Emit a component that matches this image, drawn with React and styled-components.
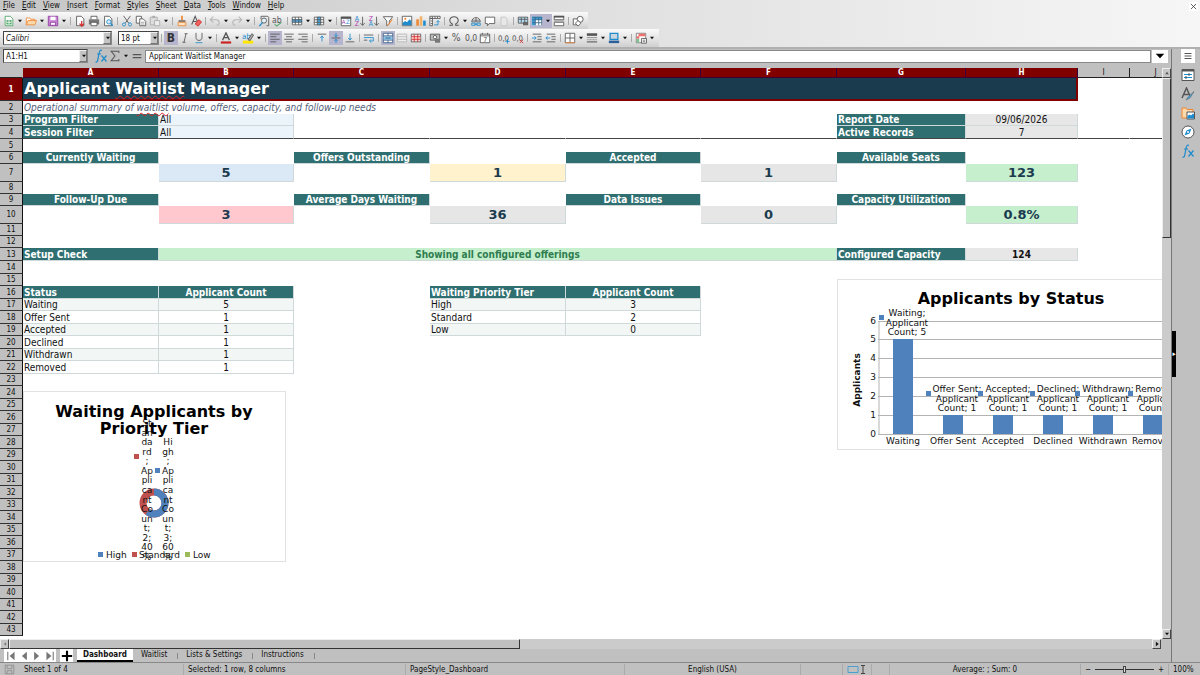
import React, { useState } from 'react'
import styled, { createGlobalStyle, css } from 'styled-components'

const GlobalStyle = createGlobalStyle`
  * { box-sizing: border-box; }
  body {
    margin: 0;
    background: #c0c0c0;
    color: #111;
    font-family: "DejaVu Sans Condensed", "DejaVu Sans", sans-serif;
    font-size: 8px;
  }
  button, input, select { font: inherit; color: inherit; margin: 0; }
  button { padding: 0; border: 0; background: none; }
`

// ---------- icons, all on a 14 x 14 grid ----------

const G = '#555'
const B = '#1e8bcd'
const O = '#ed8733'
const R = '#d0302c'

const line = (d, stroke = G, width = 1) => (
  <path d={d} fill="none" stroke={stroke} strokeWidth={width} />
)
const page = <path d="M3 1.500h5.500l3 3v8h-8.500z" fill="#fff" stroke={G} strokeWidth="1" />
const gridBox = line('M1.500 2.500h11v9h-11zM1.500 5.500h11M1.500 8.500h11M5 2.500v9M9 2.500v9')

const icons = {
  new: <><path d="M2.500 1.500h6l3 3v8h-9z" fill="#fff" stroke="#4ba566" /><path d="M4 6h6v5H4z" fill="#4ba566" />{line('M4 8.500h6M7 6v5', '#fff')}</>,
  open: <><path d="M1.500 11.500v-8h4l1 1.500h5v2" fill="#fff" stroke={O} /><path d="M1.500 11.500l2-5h10l-2 5z" fill="#fbd9ab" stroke={O} /></>,
  save: <><path d="M1.500 1.500h11v11h-11z" fill="#c986d4" stroke="#8d3aa0" /><path d="M4 2h6v4H4z" fill="#fff" /><path d="M4 8.500h6V12H4z" fill="#fff" stroke="#8d3aa0" /></>,
  pdf: <>{page}<path d="M9 7v4.500M6.500 10l2.500 3 2.500-3" stroke={R} fill="none" strokeWidth="1.500" /></>,
  print: <><path d="M3.500 5V1.500h7V5" fill="#fff" stroke={G} /><path d="M1 5h12v6H1z" fill="#777" /><path d="M3.500 8.500h7v4h-7z" fill="#fff" stroke={G} /></>,
  preview: <>{page}<circle cx="8" cy="8" r="2.500" fill="#d7ecf8" stroke={B} />{line('M10 10l2.500 2.500', B, 1.500)}</>,
  cut: <>{line('M3 1l6 8.500M11 1L5 9.500')}<circle cx="3.500" cy="11" r="1.800" fill="none" stroke={B} /><circle cx="10.500" cy="11" r="1.800" fill="none" stroke={B} /></>,
  copy: <><path d="M1.500 1.500h6v8h-6z" fill="#fff" stroke={G} /><path d="M5.500 4.500h4l3 3v5h-7z" fill="#fff" stroke={G} />{line('M7 8.500h4M7 10.500h4', '#999')}</>,
  paste: <><path d="M1.500 2.500h8v9h-8z" fill="#ddd" stroke="#aaa" /><path d="M4 1h3v2.500H4z" fill="#aaa" /><path d="M6.500 6.500h6v6h-6z" fill="#eee" stroke="#aaa" /></>,
  clone: <><path d="M6 1h2v5H6z" fill={O} /><path d="M3 6h8v2.500H3z" fill="#777" /><path d="M2.500 8.500h9v4h-9z" fill="#fde3c4" stroke={O} /></>,
  clear: <>{line('M2 11L6 1.500l3 7M3.500 7.500h4', G, 1.200)}<path d="M6 10.500l4-5 3.500 2.500-4 5z" fill="#f0625f" stroke={R} /></>,
  undo: line('M5 2L1.500 5.500 5 9M2 5.500h6c5 0 5 6.500 1 6.500', '#b5b5b5', 1.200),
  redo: line('M9 2l3.500 3.500L9 9M12 5.500H6c-5 0-5 6.500-1 6.500', '#b5b5b5', 1.200),
  find: <>{line('M3.500 5V1.500h8l1 1v10H10')}<circle cx="7" cy="6.500" r="3" fill="#e3f1fa" stroke={G} />{line('M5 9l-3.500 4', B, 1.500)}</>,
  spell: <><text x="0" y="9" fontSize="10" fill={G}>ab</text>{line('M3 10.500l2.500 2.500L11 8.500', '#4ba566', 1.200)}</>,
  rows: <><path d="M1 2h12v10H1z" fill="#fff" /><path d="M1 5h12v3.500H1z" fill="#4aa7df" />{gridBox}</>,
  cols: <><path d="M1 2h12v10H1z" fill="#fff" /><path d="M5 2h4v10H5z" fill="#4aa7df" />{gridBox}</>,
  sort: <><path d="M1.500 2.500h11v10h-11z" fill="#fff" stroke={G} /><path d="M1 2h12v2.500H1z" fill={G} /><text x="2" y="11" fontSize="7" fill="#9a3fb0">A</text><text x="7" y="11" fontSize="7" fill={B}>Z</text></>,
  sortUp: <><text x="1" y="6.500" fontSize="8" fill={B}>A</text><text x="1" y="13" fontSize="8" fill="#b03fb0">Z</text>{line('M10 2v10M7.500 9.500l2.500 2.500 2.500-2.500')}</>,
  sortDown: <><text x="1" y="6.500" fontSize="8" fill="#b03fb0">Z</text><text x="1" y="13" fontSize="8" fill={B}>A</text>{line('M10 2v10M7.500 9.500l2.500 2.500 2.500-2.500')}</>,
  filter: <><path d="M1.500 2h11L8.500 7v3.500l-3 2V7z" fill="#fff" stroke={G} />{line('M6.500 12.500L12 5', O, 1.200)}</>,
  image: <><path d="M1.500 1.500h11v11h-11z" fill="#fff" stroke={G} /><path d="M2 12V9l3-2 2 1.500L10 5l2 2v5z" fill={B} /><circle cx="5" cy="4.500" r="1.200" fill={O} /></>,
  chart: <><path d="M1.500 5h3v7.500h-3z" fill={O} /><path d="M5.500 1.500h3v11h-3z" fill="#f3b367" /><path d="M9.500 6.500h3v6h-3z" fill={B} /></>,
  pivot: <><path d="M1 1.500h12V4H1zM1 4h3v8.500H1z" fill="#fff" stroke={G} />{line('M4 2v2M7 2v2M10 2v2M2 7h2M2 10h2')}{line('M6 11.500h4.500v-5M8.500 8.500l2-2 2 2', B)}</>,
  omega: line('M1.500 12h3.500v-1.500C0 7.500 2 2 7 2s7 5.500 2 8.500V12h3.500', G, 1.200),
  link: <><path d="M2 8a5 5 0 0110 0z" fill="#fff" stroke={G} />{line('M7 3v5M2.500 6h9')}<path d="M2 9.500h4v2.500H2zM8 9.500h4v2.500H8zM5 10.800h4" fill="none" stroke={B} /></>,
  comment: <path d="M1.500 2.500h11v7.500H6l-2 2.500V10H1.500z" fill="#fff" stroke={G} />,
  header: <path d="M3.500 2.500h5l2 2v8h-7z" fill="#e8e8e8" stroke="#c2c2c2" />,
  printArea: <><path d="M1.500 2.500h11v7h-11z" fill="#b5dcf3" stroke={G} />{line('M2 5h10M5 3v6M9 3v6')}<path d="M7 8h6v4H7z" fill="#666" /></>,
  freeze: <><path d="M1 2h12v10H1z" fill="#fff" /><path d="M1 2h12v3.500H5V12H1z" fill="#3f9bd6" />{line('M1.500 2.500h11v9.500M5 2.500v9.500M9 2.500v9.500M1.500 5.500h11M1.500 9h11', '#36678a')}</>,
  split: <><path d="M1.500 1.500h11v4h-11zM1.500 8.500h11v4h-11z" fill="#fff" stroke={G} /><path d="M1 1h12v2H1z" fill={G} />{line('M1 7h12', '#888')}</>,
  shapes: <><path d="M1.500 4.500h6v7h-6z" fill="#fff" stroke={G} /><circle cx="9.500" cy="5" r="3.500" fill="#fff" stroke={G} /><path d="M7 13l-3-3.500 3-3 3.500 3z" fill="#fff" stroke={G} /></>,

  bold: <text x="2" y="12" fontSize="14" fontWeight="bold" fill="#333">B</text>,
  italic: line('M6.500 2H10M4 12h3.500M8.200 2L5.800 12'),
  underline: <>{line('M3.500 1v5.500c0 4.500 7 4.500 7 0V1')}{line('M3 12.500h8', B)}</>,
  fontColor: <>{line('M3 9.500l4-8.500 4 8.500M4.500 6.500h5', G, 1.500)}<path d="M1 11h12v2.500H1z" fill="#c9211e" /></>,
  highlight: <><path d="M1 10h12v3.500H1z" fill="#ffe600" /><text x="0" y="8" fontSize="9" fill={B}>ab</text><path d="M7 9l4.500-7 2 1.500L9.500 10z" fill="#aaa" stroke={G} /></>,
  left: line('M1.500 2.500h11M1.500 5.500h7M1.500 8.500h11M1.500 11.500h7'),
  center: line('M1.500 2.500h11M3.500 5.500h7M1.500 8.500h11M3.500 11.500h7'),
  right: line('M1.500 2.500h11M5.500 5.500h7M1.500 8.500h11M5.500 11.500h7'),
  top: <>{line('M2 2.500h10')}{line('M7 11V5M5 7l2-2.500L9 7', B)}</>,
  middle: <>{line('M2 7h10')}{line('M7 1v5M7 8v5M5 3.500l2 2 2-2M5 10.500l2-2 2 2', B)}</>,
  bottom: <>{line('M2 11.500h10')}{line('M7 2v6.500M5 7l2 2.500L9 7', B)}</>,
  wrap: <>{line('M1 3.500h11M1 9.500h4')}{line('M1 6.500h11v4H8M9.500 8.500l-2 2 2 2', B)}</>,
  merge: <><path d="M1.500 1.500h11v11h-11z" fill="#fff" stroke="#3a5c86" /><path d="M2 5h10v4H2z" fill="#85c5ea" />{line('M1.500 4.500h11M1.500 9.500h11M7 1.500v3M7 9.500v3M4 7h6', '#3a5c86')}</>,
  mergeCells: <><path d="M1.500 2.500h11v9h-11z" fill="#eee" stroke="#b5b5b5" />{line('M1.500 5.500h11M1.500 8.500h11', '#b5b5b5')}</>,
  unmerge: <><path d="M1.500 2.500h11v9h-11z" fill="#fff" stroke={G} /><path d="M2 5h10v4H2z" fill="#f9bab8" />{line('M1.500 5h11M1.500 9h11M5 2.500v9M9 2.500v9', R)}</>,
  currency: <><path d="M1.500 2.500h11v7h-11z" fill="#bbb" stroke={G} /><circle cx="7" cy="6" r="2" fill="#fff" stroke={G} /><path d="M7 8h6v4.500H7z" fill="#777" /></>,
  percent: <text x="1" y="11" fontSize="12" fill={G}>%</text>,
  number: <text x="0" y="11" fontSize="10" fill={G}>0,0</text>,
  date: <><path d="M1.500 2.500h11v10h-11z" fill="#fff" stroke={G} />{line('M1.500 4.500h11M4 1v2M10 1v2', G)}<text x="5" y="12" fontSize="8" fill={G}>7</text></>,
  addDecimal: <><text x="0" y="10" fontSize="9" fill={G}>0,0</text>{line('M11 8.500v5M8.500 11h5', B)}</>,
  delDecimal: <><text x="0" y="10" fontSize="9" fill={G}>0,0</text>{line('M9 9l4 4M13 9l-4 4', R)}</>,
  indent: <>{line('M2 2.500h10M7.500 5.500h5M7.500 8.500h5M2 11.500h10')}{line('M1 7h5M4 5l2 2-2 2', B)}</>,
  outdent: <>{line('M2 2.500h10M7.500 5.500h5M7.500 8.500h5M2 11.500h10')}{line('M6 7H1M3 5L1 7l2 2', B)}</>,
  borders: <><path d="M1.500 1.500h11v11h-11z" fill="#fff" stroke={G} />{line('M7 2v10M2 7h10')}{line('M1.500 12.500h11', O)}</>,
  lineStyle: <><path d="M1 1.500h12v3H1z" fill={G} />{line('M1 6.500h12', '#888')}{line('M1 9h12', '#999')}<path d="M1 10.500h12v2H1z" fill="#888" /></>,
  borderColor: <><path d="M2.500 1.500h9v7h-9z" fill="#c9d6df" stroke={B} strokeWidth="1.500" /><path d="M1 10h12v3H1z" fill="#2a6099" /></>,
  conditional: <><path d="M1.500 1.500h11v11h-11z" fill="#fff" stroke="#777" /><path d="M4 2h8v3H4zM2 5h3v3H2z" fill="#f0706d" /><path d="M2 8h3v4H2z" fill="#7fc58f" /><path d="M7.500 7.500h6v5.500h-6z" fill="#fff" stroke={G} />{line('M9 9.500h3M9 11h3', '#777')}</>,

  fx: <><path d="M8 1.500c-2-1-2.500.5-3 3.500L3.500 12c-.3 1-1 1.500-2 1M3 5h4" fill="none" stroke={B} strokeWidth="1.200" />{line('M7.500 6.500l5 6M12.500 6.500l-5 6', B, 1.200)}</>,
  sum: line('M11.500 3.500v-2h-9L7 7l-4.500 5.500h9v-2', G, 1.200),
  equals: line('M2 5.500h10M2 9h10', G, 1.500),
  menu: line('M3.500 4.500h7M3.500 7h7M3.500 9.500h7'),
  props: <><path d="M1 1.500h12v11H1z" fill="#fff" stroke={G} /><path d="M1 1h12v2.500H1z" fill={G} />{line('M3 6.500h8M3 9.500h8', B)}{line('M8 5v3M5 8v3', G)}</>,
  styles: <>{line('M1 11L5.500 1 9 9M2.500 7.500h5', G, 1.500)}<path d="M5 13l2-3 6-5.500-4 6.500z" fill="#4aa7df" stroke={G} strokeWidth="0.500" /></>,
  gallery: <><path d="M1 12V2h4l1 1.500h6V12z" fill="#fbd9ab" stroke={O} /><path d="M6 6h7.500v7H6z" fill="#fff" stroke={G} /><path d="M6.500 12.500V10l2-1.500 1.500 1 2-2 1 1v4z" fill={B} /></>,
  navigator: <><circle cx="7" cy="7" r="6" fill="#fff" stroke={G} /><path d="M10.500 3.500L8.500 8.500 3.500 10.500l2-5z" fill={B} /><circle cx="7" cy="7" r="1" fill="#fff" /></>,
  disk: <><path d="M1.500 1.500h11v11h-11z" fill="none" stroke="#888" />{line('M4 2v4h6V2M4 12.500v-4h6v4', '#888')}</>,
  close: line('M3 3l8 8M11 3l-8 8', '#333', 1.200),
  caret: <path d="M3.500 5h7L7 9z" fill="#111" />,
  caretBig: <path d="M1 4h12l-6 6z" fill="#000" />,
  first: <><path d="M12 1v12L5 7z" fill="#777" />{line('M2.500 1v12', '#777', 1.500)}</>,
  prev: <path d="M11 1v12L4 7z" fill="#777" />,
  next: <path d="M3 1v12l7-6z" fill="#777" />,
  last: <><path d="M2 1v12l7-6z" fill="#777" />{line('M11.500 1v12', '#777', 1.500)}</>,
  plus: line('M7 1v12M1 7h12', '#000', 2.500),
  up: <path d="M4 9h6L7 5z" fill="#555" />,
  leftArrow: <path d="M9 4v6L5 7z" fill="#777" />,
  rightArrow: <path d="M5 3v8l5-4z" fill="#111" />,
}

const Svg = styled.svg`
  display: block;
  flex: none;
`

const Icon = ({ name, size = 14 }) => (
  <Svg width={size} height={size} viewBox="0 0 14 14" aria-hidden="true">
    {icons[name]}
  </Svg>
)

// ---------- window chrome ----------

const Window = styled.div`
  display: flex;
  flex-direction: column;
  height: 100vh;
  overflow: hidden;
`

const TopArea = styled.header`
  flex: none;
  height: 47px;
  background: linear-gradient(90deg, #c6c6c6, #e0e0e0 50%, #f6f6f6);
`

const MenuBar = styled.nav`
  display: flex;
  align-items: center;
  gap: 7px;
  height: 12px;
  padding: 0 2px 0 3px;
`

const MenuItem = styled.button`
  line-height: 12px;

  &::first-letter { text-decoration: underline; }
`

const CloseButton = styled.button`
  display: grid;
  place-items: center;
  width: 9px;
  height: 9px;
  margin-left: auto;
  background: #fff;
`

const Toolbar = styled.div`
  display: flex;
  align-items: center;
  width: max-content;
  height: ${p => (p.$tall ? 18 : 17)}px;
  padding: 0 3px 0 2px;
  background: linear-gradient(#fafafa, #e6e6e6 50%, #cfcfcf);
`

const ToolButton = styled.button`
  display: grid;
  place-items: center;
  width: ${p => (p.$caret ? 8 : 14)}px;
  height: 14px;
  background: ${p => (p.$on ? '#b7b5cd' : 'transparent')};
`

const Separator = styled.span`
  width: 1px;
  height: 8px;
  margin: 0 2px;
  background: #aaa;
`

const Combo = styled.span`
  display: grid;
  align-items: center;
  width: ${p => p.$width}px;
  height: 14px;
  margin: 0 ${p => p.$gap || 0}px 0 1px;
  background: #fff;
  border: 1px solid #444;
  border-right-color: #888;
  border-bottom-color: #888;

  > * { grid-area: 1 / 1; }
`

const Select = styled.select`
  width: 100%;
  height: 12px;
  padding: 0 2px;
  border: 0;
  background: none;
  appearance: none;
  font-style: ${p => (p.$italic ? 'italic' : 'normal')};
`

const ComboArrow = styled.span`
  display: grid;
  place-items: center;
  justify-self: end;
  width: 8px;
  height: 12px;
  background: #c4c4c4;
  border: 1px solid #777;
  border-top-color: #eee;
  border-left-color: #eee;
  pointer-events: none;
`

const Main = styled.main`
  display: flex;
  flex: 1;
  min-height: 0;
  border-top: 2px solid #b0b0b0;
`

const Workspace = styled.section`
  display: flex;
  flex-direction: column;
  flex: 1;
  min-width: 0;
`

const FormulaBar = styled.div`
  display: flex;
  align-items: center;
  flex: none;
  height: 14px;
  margin-bottom: 5px;
  padding: 0 3px 0 2px;
`

const FormulaTools = styled.div`
  display: flex;
  padding: 0 1px 0 6px;
`

const FormulaInput = styled.input`
  flex: 1;
  min-width: 0;
  height: 13px;
  padding: 0 3px;
  border: 1px solid #888;
  background: #fff;
`

const ExpandButton = styled.button`
  display: grid;
  place-items: center;
  width: 16px;
  height: 13px;
  margin-left: 1px;
  background: #fff;
`

const Sidebar = styled.aside`
  display: flex;
  flex: none;
  width: 29px;
  border-left: 1px solid #777;
`

const SidebarHandle = styled.button`
  align-self: center;
  width: 4px;
  height: 46px;
  margin-bottom: 4px;
  background: #000;
  color: #fff;
  font-size: 7px;
  line-height: 46px;
`

const SidebarTabs = styled.div`
  display: flex;
  flex-direction: column;
  align-items: center;
  gap: 5px;
  flex: 1;
`

const SidebarButton = styled.button`
  display: grid;
  place-items: center;
  width: 14px;
  height: 14px;
  background: ${p => (p.$menu ? '#fff' : 'transparent')};
`

// ---------- sheet ----------

const SheetArea = styled.div`
  display: flex;
  flex: 1;
  min-height: 0;
`

const SheetView = styled.div`
  position: relative;
  flex: 1;
  min-width: 0;
  overflow: hidden;
  background: #fff;
`

const Grid = styled.table`
  width: 100%;
  table-layout: fixed;
  border-collapse: separate;
  border-spacing: 0;
  font-size: 10px;
  line-height: 10px;
`

const headerCell = css`
  padding: 0;
  background: ${p => (p.$active ? '#800000' : '#c0c0c0')};
  color: ${p => (p.$active ? '#fff' : '#111')};
  font-size: 8px;
  font-weight: ${p => (p.$active ? 'bold' : 'normal')};
`

const ColHeader = styled.th`
  ${headerCell}
  line-height: 9px;
  border-right: 1px solid ${p => (p.$active ? '#3d0030' : p.$corner ? '#c0c0c0' : '#222')};
  border-bottom: 1px solid ${p => (p.$active ? '#3d0030' : '#222')};
`

const RowHeader = styled.th`
  ${headerCell}
  padding-top: 1px;
  line-height: 10px;
  border-right: 1px solid #111;
  border-bottom: 1px solid #333;
`

const Row = styled.tr`
  height: ${p => p.$height}px;

  ${p => p.$frozen && css`
    && > * { border-bottom-color: #444; }
  `}
`

const teal = css`
  background: #2f6f71;
  color: #fff;
  font-weight: bold;
`

const looks = {
  empty: css`border-color: transparent;`,
  title: css`
    background: #1a3b4e;
    color: #fff;
    font-family: "DejaVu Sans", sans-serif;
    font-size: 16px;
    font-weight: bold;
    line-height: 20px;
    border-right: 2px solid #800000;
    border-bottom: 2px solid #800000;
  `,
  subtitle: css`
    color: #53607a;
    font-style: italic;
    border-color: transparent;
  `,
  label: teal,
  head: css`${teal} text-align: center;`,
  filter: css`background: #ecf4fb;`,
  meta: css`background: #e7e7e7; text-align: center;`,
  metaBold: css`background: #e7e7e7; text-align: center; font-weight: bold;`,
  kpi: css`
    background: ${p => p.$fill};
    color: #1a3b4e;
    font-family: "DejaVu Sans", sans-serif;
    font-size: 13px;
    font-weight: bold;
    line-height: 16px;
    text-align: center;
  `,
  banner: css`
    background: #c6efce;
    color: #2e7d4f;
    font-weight: bold;
    text-align: center;
  `,
  text: css`background: ${p => p.$fill};`,
  count: css`background: ${p => p.$fill}; text-align: center;`,
}

const Cell = styled.td`
  padding: 1px 1px 0;
  border-right: 1px solid #cfd9da;
  border-bottom: 1px solid #cfd9da;
  white-space: nowrap;
  ${p => looks[p.$look]}
`

const Misspelled = styled.span`
  text-decoration: underline wavy #d22 1px;
`

const columns = [
  ['A', 136], ['B', 135], ['C', 136], ['D', 136], ['E', 135],
  ['F', 136], ['G', 129], ['H', 112], ['I', 52], ['J', 52],
]

const rowHeights = [
  23, 13, 12, 13, 13, 12, 18, 12, 12, 18, 12, 12, 13, 13, 12, 13,
]
const rowCount = 43
const heightOf = row => rowHeights[row - 1] || (row % 2 ? 12 : 13)

const cells = {
  A1: { look: 'title', span: 8, text: <>Applicant <Misspelled>Waitlist</Misspelled> Manager</> },
  A2: { look: 'subtitle', span: 8, text: <>Operational summary of <Misspelled>waitlist</Misspelled> volume, offers, capacity, and follow-up needs</> },
  A3: { look: 'label', text: 'Program Filter' },
  B3: { look: 'filter', text: 'All' },
  G3: { look: 'label', text: 'Report Date' },
  H3: { look: 'meta', text: '09/06/2026' },
  A4: { look: 'label', text: 'Session Filter' },
  B4: { look: 'filter', text: 'All' },
  G4: { look: 'label', text: 'Active Records' },
  H4: { look: 'meta', text: '7' },
  A6: { look: 'head', text: 'Currently Waiting' },
  C6: { look: 'head', text: 'Offers Outstanding' },
  E6: { look: 'head', text: 'Accepted' },
  G6: { look: 'head', text: 'Available Seats' },
  B7: { look: 'kpi', text: '5', fill: '#dbe9f6' },
  D7: { look: 'kpi', text: '1', fill: '#fff2cc' },
  F7: { look: 'kpi', text: '1', fill: '#e6e6e6' },
  H7: { look: 'kpi', text: '123', fill: '#c6efce' },
  A9: { look: 'head', text: 'Follow-Up Due' },
  C9: { look: 'head', text: 'Average Days Waiting' },
  E9: { look: 'head', text: 'Data Issues' },
  G9: { look: 'head', text: 'Capacity Utilization' },
  B10: { look: 'kpi', text: '3', fill: '#ffc7ce' },
  D10: { look: 'kpi', text: '36', fill: '#e6e6e6' },
  F10: { look: 'kpi', text: '0', fill: '#e6e6e6' },
  H10: { look: 'kpi', text: '0.8%', fill: '#c6efce' },
  A13: { look: 'label', text: 'Setup Check' },
  B13: { look: 'banner', span: 5, text: 'Showing all configured offerings' },
  G13: { look: 'label', text: 'Configured Capacity' },
  H13: { look: 'metaBold', text: '124' },
  A16: { look: 'label', text: 'Status' },
  B16: { look: 'head', text: 'Applicant Count' },
  D16: { look: 'label', text: 'Waiting Priority Tier' },
  E16: { look: 'head', text: 'Applicant Count' },
}

const addRows = (textCol, countCol, data) =>
  data.forEach(([name, count], i) => {
    const fill = i % 2 ? '#fff' : '#f2f6f5'
    cells[`${textCol}${17 + i}`] = { look: 'text', text: name, fill }
    cells[`${countCol}${17 + i}`] = { look: 'count', text: count, fill }
  })

const statuses = [
  ['Waiting', 5], ['Offer Sent', 1], ['Accepted', 1],
  ['Declined', 1], ['Withdrawn', 1], ['Removed', 1],
]
addRows('A', 'B', statuses)
addRows('D', 'E', [['High', 3], ['Standard', 2], ['Low', 0]])

const SheetRow = ({ row }) => {
  const out = []
  for (let c = 0; c < columns.length; c++) {
    const cell = cells[columns[c][0] + row] || { look: 'empty' }
    out.push(
      <Cell key={c} colSpan={cell.span} $look={cell.look} $fill={cell.fill}>
        {cell.text}
      </Cell>
    )
    if (cell.span) c += cell.span - 1
  }
  return (
    <Row $height={heightOf(row)} $frozen={row === 4}>
      <RowHeader scope="row" $active={row === 1}>{row}</RowHeader>
      {out}
      <Cell $look="empty" />
    </Row>
  )
}

// ---------- charts ----------

const ChartFrame = styled.svg`
  position: absolute;
  left: ${p => p.$left}px;
  top: ${p => p.$top}px;
  background: #fff;
  border: 1px solid #e2e2e2;
  font-family: "DejaVu Sans", sans-serif;
  font-size: 9px;
  fill: #111;
`

const ChartTitle = styled.text`
  font-size: 16px;
  font-weight: bold;
  text-anchor: middle;
  fill: #000;
`

const Centered = styled.text`
  text-anchor: middle;
`

const BLUE = '#4f81bd'

// label x, swatch x for each bar
const barLabels = [[69, 41], [119, 88], [170, 140], [220, 192], [270, 237], [320, 290]]
const yOf = value => 154 - value * 19 + Math.floor(value / 6)

const BarChart = () => (
  <ChartFrame $left={837} $top={211} width="348" height="171" role="img" aria-label="Applicants by Status">
    <ChartTitle x="173" y="24">Applicants by Status</ChartTitle>
    <Centered transform="translate(22 100) rotate(-90)" fontWeight="bold">Applicants</Centered>
    {[0, 1, 2, 3, 4, 5, 6].map(v => (
      <g key={v}>
        <path d={`M40 ${yOf(v) + 0.5}H348`} stroke="#b3b3b3" />
        <text x="38" y={yOf(v) + 3} textAnchor="end">{v}</text>
      </g>
    ))}
    <path d="M41 41v114" stroke="#b3b3b3" />
    {statuses.map(([name, count], i) => (
      <g key={name}>
        <rect x={55 + i * 50} y={yOf(count)} width="20" height={154 - yOf(count)} fill={BLUE} />
        <Centered x={65 + i * 50} y="164">{name}</Centered>
        <rect x={barLabels[i][1]} y={yOf(count) - 24} width="5" height="5" fill={BLUE} />
        <Centered x={barLabels[i][0]} y={yOf(count) - 23}>{name};</Centered>
        <Centered x={barLabels[i][0]} y={yOf(count) - 13}>Applicant</Centered>
        <Centered x={barLabels[i][0]} y={yOf(count) - 4}>Count; {count}</Centered>
      </g>
    ))}
  </ChartFrame>
)

const highLabel = ['Hi', 'gh', ';', 'Ap', 'pli', 'ca', 'nt', 'Co', 'un', 't;', '3;', '60', '%']
const standardLabel = ['St', 'an', 'da', 'rd', ';', 'Ap', 'pli', 'ca', 'nt', 'Co', 'un', 't;', '2;', '40', '%']

const StackedLabel = ({ x, from, to, parts }) =>
  parts.map((part, i) => (
    <Centered key={i} x={x} y={Math.round(from + ((to - from) * i) / (parts.length - 1))}>
      {part}
    </Centered>
  ))

const DonutChart = () => (
  <ChartFrame $left={23} $top={323} width="263" height="171" role="img" aria-label="Waiting Applicants by Priority Tier">
    <ChartTitle x="130" y="25">Waiting Applicants by</ChartTitle>
    <ChartTitle x="130" y="42">Priority Tier</ChartTitle>
    {/* ring starts at 12 o'clock: 60% blue, 40% red */}
    <circle cx="130" cy="111" r="11" fill="none" stroke="#c0504d" strokeWidth="7" />
    <circle
      cx="130" cy="111" r="11" fill="none" stroke={BLUE} strokeWidth="7"
      pathLength="100" strokeDasharray="60 40" transform="rotate(-90 130 111)"
    />
    <rect x="110" y="62" width="5" height="5" fill="#c0504d" />
    <rect x="131" y="76" width="5" height="5" fill={BLUE} />
    <StackedLabel x={123} from={34} to={168} parts={standardLabel} />
    <StackedLabel x={144} from={53} to={168} parts={highLabel} />
    <rect x="74" y="160" width="5" height="5" fill={BLUE} />
    <text x="82" y="166">High</text>
    <rect x="108" y="160" width="5" height="5" fill="#c0504d" />
    <text x="115" y="166">Standard</text>
    <rect x="161" y="160" width="5" height="5" fill="#9bbb59" />
    <text x="169" y="166">Low</text>
  </ChartFrame>
)

// ---------- scroll bars, tabs, status ----------

const VScroll = styled.div`
  display: flex;
  flex-direction: column;
  flex: none;
  width: 9px;
  background: #cbcbcb;
`

const HScroll = styled.div`
  display: flex;
  flex: none;
  height: 10px;
  margin-right: 10px;
  background: #cbcbcb;
`

const ScrollButton = styled.button`
  display: grid;
  place-items: center;
  flex: none;
  width: 9px;
  height: 10px;
  background: #c6c6c6;
  border: 1px solid;
  border-color: #eee #444 #444 #eee;
`

const Thumb = styled.div`
  flex: 0 0 ${p => p.$size};
  background: #c0c0c0;
  border: 1px solid;
  border-color: #eee #333 #333 #eee;
`

const Spring = styled.div`
  flex: 1;
`

const TabBar = styled.div`
  display: flex;
  align-items: stretch;
  flex: none;
  height: 13px;
  padding: 0 4px;
`

const TabNav = styled.div`
  display: flex;
  background: #fff;
  margin-right: 4px;
`

const TabNavButton = styled.button`
  display: grid;
  place-items: center;
  width: 13px;
  background: #fff;
`

const Tab = styled.button`
  padding: 0 ${p => (p.$active ? 6 : 10)}px 0 ${p => (p.$active ? 6 : 8)}px;
  margin-left: ${p => (p.$active ? 4 : 0)}px;
  background: ${p => (p.$active ? '#fff' : 'transparent')};
  border-bottom: 2px solid ${p => (p.$active ? '#000' : 'transparent')};
  font-weight: ${p => (p.$active ? 'bold' : 'normal')};
  line-height: 11px;
`

const TabDivider = styled.span`
  align-self: center;
  width: 1px;
  height: 6px;
  background: #888;
`

const StatusBar = styled.footer`
  display: grid;
  grid-template-columns: 20fr 164fr 222fr 219fr 176fr 42fr 29fr 18fr 191fr 88px 31px;
  align-items: end;
  flex: none;
  height: 13px;
  border-top: 1px solid #888;
`

const StatusItem = styled.div`
  display: flex;
  align-items: center;
  justify-content: ${p => (p.$center ? 'center' : 'flex-start')};
  height: 11px;
  padding: 0 4px;
  border-right: 1px solid ${p => (p.$plain ? 'transparent' : '#aaa')};
  white-space: nowrap;
`

const Zoom = styled.input`
  flex: 1;
  min-width: 0;
  height: 8px;
  margin: 0 4px;
  appearance: none;
  background: linear-gradient(#333, #333) center / 100% 1px no-repeat;

  &::-webkit-slider-thumb {
    appearance: none;
    width: 3px;
    height: 7px;
    background: #ddd;
    border: 1px solid #444;
  }
`

// '|' is a separator, a trailing ':v' adds a drop-down arrow, a leading '*' is pressed
const standardTools = 'new:v open:v save:v | pdf print preview | cut copy paste:v | clone clear | undo:v redo:v | find spell | rows:v cols:v | sort sortUp sortDown filter | image chart pivot | omega:v link comment header | printArea *freeze:v split | shapes'
const formatTools = '*bold italic underline:v | fontColor:v highlight:v | *left center right | top *middle bottom | wrap | *merge mergeCells unmerge | currency:v percent number date | addDecimal delDecimal | indent outdent | borders:v lineStyle:v borderColor:v | conditional:v'

const Tools = ({ items }) =>
  items.split(' ').map((item, i) => {
    if (item === '|') return <Separator key={i} />
    const on = item[0] === '*'
    const [name, caret] = item.replace('*', '').split(':')
    return (
      <React.Fragment key={i}>
        <ToolButton type="button" aria-label={name} $on={on}>
          <Icon name={name} size={12} />
        </ToolButton>
        {caret && (
          <ToolButton type="button" aria-label={`${name} options`} $caret $on={on && name === 'freeze'}>
            <Icon name="caret" size={8} />
          </ToolButton>
        )}
      </React.Fragment>
    )
  })

const ComboBox = ({ label, value, width, gap, italic }) => (
  <Combo $width={width} $gap={gap}>
    <Select aria-label={label} defaultValue={value} $italic={italic}>
      <option>{value}</option>
    </Select>
    <ComboArrow><Icon name="caret" size={8} /></ComboArrow>
  </Combo>
)

const menus = ['File', 'Edit', 'View', 'Insert', 'Format', 'Styles', 'Sheet', 'Data', 'Tools', 'Window', 'Help']
const tabs = ['Dashboard', 'Waitlist', 'Lists & Settings', 'Instructions']

const App = () => {
  const [tab, setTab] = useState('Dashboard')
  const [zoom, setZoom] = useState(100)

  return (
    <Window>
      <GlobalStyle />
      <TopArea>
        <MenuBar>
          {menus.map(m => <MenuItem key={m} type="button">{m}</MenuItem>)}
          <CloseButton type="button" aria-label="Close"><Icon name="close" size={9} /></CloseButton>
        </MenuBar>
        <Toolbar><Tools items={standardTools} /></Toolbar>
        <Toolbar $tall>
          <ComboBox label="Font name" value="Calibri" width={109} gap={5} italic />
          <ComboBox label="Font size" value="18 pt" width={41} />
          <Separator />
          <Tools items={formatTools} />
        </Toolbar>
      </TopArea>

      <Main>
        <Workspace>
          <FormulaBar>
            <ComboBox label="Name box" value="A1:H1" width={85} />
            <FormulaTools>
              <ToolButton type="button" aria-label="Function wizard"><Icon name="fx" /></ToolButton>
              <ToolButton type="button" aria-label="Sum"><Icon name="sum" size={12} /></ToolButton>
              <ToolButton type="button" aria-label="Sum options" $caret><Icon name="caret" size={8} /></ToolButton>
              <ToolButton type="button" aria-label="Formula"><Icon name="equals" size={12} /></ToolButton>
            </FormulaTools>
            <FormulaInput aria-label="Input line" defaultValue="Applicant Waitlist Manager" />
            <ExpandButton type="button" aria-label="Expand formula bar"><Icon name="caretBig" size={10} /></ExpandButton>
          </FormulaBar>

          <SheetArea>
            <SheetView>
              <Grid>
                <colgroup>
                  <col width="23" />
                  {columns.map(([name, width]) => <col key={name} width={width} />)}
                  <col />
                </colgroup>
                <thead>
                  <Row $height={10}>
                    <ColHeader $corner />
                    {columns.map(([name], i) => (
                      <ColHeader key={name} scope="col" $active={i < 8}>{name}</ColHeader>
                    ))}
                    <ColHeader />
                  </Row>
                </thead>
                <tbody>
                  {Array.from({ length: rowCount }, (_, i) => <SheetRow key={i} row={i + 1} />)}
                </tbody>
              </Grid>
              <DonutChart />
              <BarChart />
            </SheetView>
            <VScroll>
              <ScrollButton type="button" aria-label="Scroll up"><Icon name="up" size={8} /></ScrollButton>
              <Thumb $size="28%" />
              <Spring />
              <ScrollButton type="button" aria-label="Scroll down"><Icon name="caret" size={8} /></ScrollButton>
            </VScroll>
          </SheetArea>

          <HScroll>
            <ScrollButton type="button" aria-label="Scroll left"><Icon name="leftArrow" size={8} /></ScrollButton>
            <Thumb $size="44%" />
            <Spring />
            <ScrollButton type="button" aria-label="Scroll right"><Icon name="rightArrow" size={8} /></ScrollButton>
          </HScroll>

          <TabBar>
            <TabNav>
              {['first', 'prev', 'next', 'last'].map(n => (
                <TabNavButton key={n} type="button" aria-label={`${n} sheet`}><Icon name={n} size={10} /></TabNavButton>
              ))}
            </TabNav>
            <TabNavButton type="button" aria-label="Add sheet"><Icon name="plus" size={12} /></TabNavButton>
            {tabs.map(t => (
              <React.Fragment key={t}>
                <Tab type="button" $active={t === tab} onClick={() => setTab(t)}>{t}</Tab>
                {t !== tab && <TabDivider />}
              </React.Fragment>
            ))}
          </TabBar>
        </Workspace>

        <Sidebar>
          <SidebarHandle type="button" aria-label="Collapse sidebar">▸</SidebarHandle>
          <SidebarTabs>
            {['menu', 'props', 'styles', 'gallery', 'navigator', 'fx'].map(n => (
              <SidebarButton key={n} type="button" aria-label={n} $menu={n === 'menu'}><Icon name={n} /></SidebarButton>
            ))}
          </SidebarTabs>
        </Sidebar>
      </Main>

      <StatusBar>
        <StatusItem $plain><Icon name="disk" size={11} /></StatusItem>
        <StatusItem>Sheet 1 of 4</StatusItem>
        <StatusItem>Selected: 1 row, 8 columns</StatusItem>
        <StatusItem>PageStyle_Dashboard</StatusItem>
        <StatusItem $center>English (USA)</StatusItem>
        <StatusItem />
        <StatusItem>
          <Svg width="18" height="9" viewBox="0 0 18 9" aria-hidden="true">
            <path d="M1 1.500h10v6H1z" fill="none" stroke="#4a9fd0" />
            <path d="M14 .5h4M14 8.500h4M16 .5v8" stroke="#444" />
          </Svg>
        </StatusItem>
        <StatusItem />
        <StatusItem $center>Average: ; Sum: 0</StatusItem>
        <StatusItem>
          −
          <Zoom
            type="range" aria-label="Zoom" min="20" max="180"
            value={zoom} onChange={e => setZoom(Number(e.target.value))}
          />
          +
        </StatusItem>
        <StatusItem $plain>{zoom}%</StatusItem>
      </StatusBar>
    </Window>
  )
}

export default App
